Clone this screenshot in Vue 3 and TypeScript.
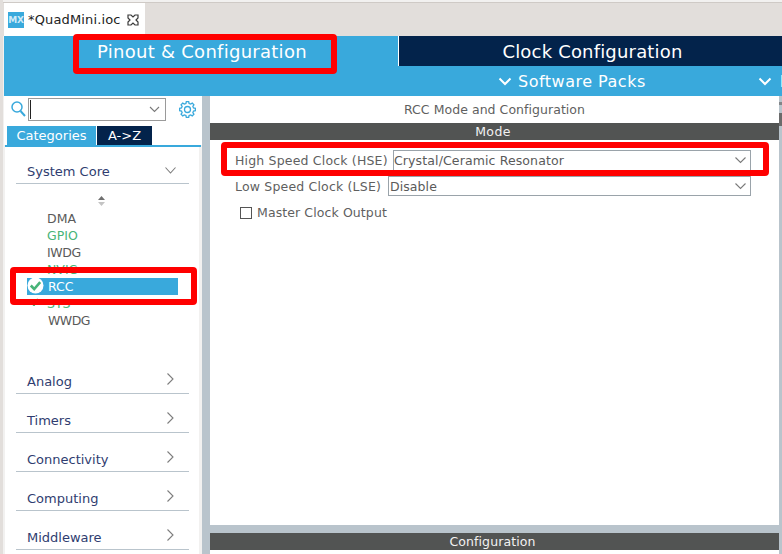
<script setup lang="ts">
const items = [
  { name: 'DMA', cls: '' },
  { name: 'GPIO', cls: 'green' },
  { name: 'IWDG', cls: 'narrow' },
  { name: 'NVIC', cls: 'green' },
  { name: 'RCC', cls: 'sel' },
  { name: 'SYS', cls: 'green' },
  { name: 'WWDG', cls: 'wide' },
]
const cats = ['Analog', 'Timers', 'Connectivity', 'Computing', 'Middleware']

function gearPath(cx: number, cy: number, outer: number, inner: number, teeth: number): string {
  const pts: string[] = []
  const step = (Math.PI * 2) / teeth
  for (let i = 0; i < teeth; i++) {
    const a = i * step - Math.PI / 2
    const offs: [number, number][] = [
      [-0.3, inner],
      [-0.17, outer],
      [0.17, outer],
      [0.3, inner],
    ]
    for (const [o, r] of offs) {
      const t = a + o * step * 1.1
      pts.push(`${(cx + r * Math.cos(t)).toFixed(2)} ${(cy + r * Math.sin(t)).toFixed(2)}`)
    }
  }
  return 'M' + pts.join('L') + 'Z'
}
const gear = gearPath(8.5, 8.5, 8, 6.2, 8)
</script>

<template>
  <div class="app">
    <div class="tabstrip">
      <div class="filetab">
        <span class="mx">MX</span>
        <span class="fname">*QuadMini.ioc</span>
        <svg class="close" width="12" height="12" viewBox="0 0 12 12">
          <path d="M1 1h3L6 3l2-2h3v3L9 6l2 2v3H8L6 9l-2 2H1V8l2-2-2-2z" fill="#fff" stroke="#3a3a3a" stroke-width="1.200" />
        </svg>
      </div>
    </div>
    <div class="header">
      <div class="mainrow">
        <div class="maintab active"><span>Pinout &amp; Configuration</span></div>
        <div class="maintab clock"><span>Clock Configuration</span></div>
      </div>
      <div class="subrow">
        <svg class="chev" width="14" height="9" viewBox="0 0 14 9"><path d="M1.500 1.500 7 7l5.500-5.500" fill="none" stroke="#fff" stroke-width="2" /></svg>
        <span class="packs">Software Packs</span>
        <svg class="chev second" width="14" height="9" viewBox="0 0 14 9"><path d="M1.500 1.500 7 7l5.500-5.500" fill="none" stroke="#fff" stroke-width="2" /></svg>
        <span class="pin">Pinout</span>
      </div>
    </div>
    <div class="body">
      <aside class="left">
        <div class="search">
          <svg class="mag" width="15" height="16" viewBox="0 0 15 16">
            <circle cx="6" cy="6" r="5" fill="none" stroke="#39a9dc" stroke-width="1.500" />
            <path d="M9.500 10 14 15" stroke="#39a9dc" stroke-width="2" />
          </svg>
          <div class="combo">
            <i class="caret"></i>
            <svg width="11" height="7" viewBox="0 0 11 7"><path d="M1 1l4.500 4.500L10 1" fill="none" stroke="#7a7a7a" stroke-width="1.100" /></svg>
          </div>
          <svg class="gear" width="17" height="17" viewBox="0 0 17 17">
            <path :d="gear" fill="none" stroke="#39a9dc" stroke-width="1.300" />
            <circle cx="8.500" cy="8.500" r="3" fill="none" stroke="#39a9dc" stroke-width="1.300" />
          </svg>
        </div>
        <div class="tabs">
          <span class="t cat">Categories</span>
          <span class="t az">A-&gt;Z</span>
        </div>
        <div class="rule"></div>
        <div class="panel">
          <div class="cathead first">
            <span>System Core</span>
            <svg class="dn" width="11" height="7" viewBox="0 0 11 7"><path d="M.5.500l5 5.500 5-5.500" fill="none" stroke="#7d7d7d" stroke-width="1.100" /></svg>
          </div>
          <div class="scroller">
            <svg width="9" height="12" viewBox="0 0 9 12"><path d="M4.500 1 8 5H1z" fill="#6f6f6f" /><path d="M4.500 11 8 7H1z" fill="#c4c4c4" /></svg>
          </div>
          <ul class="list">
            <li v-for="it in items" :key="it.name" :class="it.cls">
              <svg v-if="it.name === 'SYS'" class="tick" width="10" height="8" viewBox="0 0 10 8">
                <path d="M1 3l4 4 4-6" fill="none" stroke="#48b478" stroke-width="2.200" />
              </svg>
              <svg v-if="it.cls === 'sel'" class="ok" width="17" height="17" viewBox="0 0 17 17">
                <circle cx="8.500" cy="8.500" r="8" fill="#fff" />
                <path d="M3.800 8.500 7.200 12l6-6.800" fill="none" stroke="#48b478" stroke-width="2.600" />
              </svg>
              <span>{{ it.name }}</span>
            </li>
          </ul>
          <div v-for="c in cats" :key="c" class="cathead">
            <span>{{ c }}</span>
            <svg class="rt" width="7" height="12" viewBox="0 0 7 12"><path d="M.5.500 6 6 .5 11.500" fill="none" stroke="#7d7d7d" stroke-width="1.100" /></svg>
          </div>
        </div>
      </aside>
      <main class="right">
        <div class="pane">
          <div class="title">RCC Mode and Configuration</div>
          <div class="bar">Mode</div>
          <div class="form">
            <div class="row hse">
              <label>High Speed Clock (HSE)</label>
              <div class="select s1">
                <span>Crystal/Ceramic Resonator</span>
                <svg width="11" height="7" viewBox="0 0 11 7"><path d="M.5.500l5 5 5-5" fill="none" stroke="#7a7a7a" stroke-width="1.100" /></svg>
              </div>
            </div>
            <div class="row lse">
              <label>Low Speed Clock (LSE)</label>
              <div class="select s2">
                <span>Disable</span>
                <svg width="11" height="7" viewBox="0 0 11 7"><path d="M.5.500l5 5 5-5" fill="none" stroke="#7a7a7a" stroke-width="1.100" /></svg>
              </div>
            </div>
            <div class="check"><i class="box"></i><span>Master Clock Output</span></div>
          </div>
        </div>
        <div class="config">Configuration</div>
        <div class="tail"></div>
      </main>
      <div class="edge"><i class="m1"></i><i class="m2"></i></div>
    </div>

    <div class="red r1"></div>
    <div class="red r2"></div>
    <div class="red r3"></div>
  </div>
</template>

<style>
html, body { margin: 0; background: #fff; }
</style>

<style scoped>
.app {
  position: relative;
  width: 782px;
  height: 554px;
  overflow: hidden;
  display: flex;
  flex-direction: column;
  font-family: "DejaVu Sans", sans-serif;
  font-size: 12.500px;
  color: #5f5f5f;
  background: #f2f1f0;
  padding-left: 4px;
  box-sizing: border-box;
}
.app::before {
  content: "";
  position: absolute;
  left: 0;
  top: 0;
  width: 3px;
  height: 100%;
  background: #e2dedb;
}
.tabstrip {
  height: 33px;
  margin-top: 3px;
  margin-left: -1px;
  background: #e2dedb;
  box-shadow: 0 -1px 0 #cfcac6;
  display: flex;
  flex-shrink: 0;
}
.filetab {
  width: 141px;
  margin-left: 1px;
  background: #fff;
  display: flex;
  align-items: center;
  padding-left: 4px;
  box-sizing: border-box;
  gap: 4px;
  color: #222;
  font-size: 13px;
}
.mx {
  width: 16px;
  height: 16px;
  background: #39a9dc;
  color: #cfeaf7;
  font-size: 9px;
  font-weight: 700;
  display: flex;
  align-items: center;
  justify-content: center;
  letter-spacing: -0.3px;
}
.fname { width: 95px; white-space: nowrap; letter-spacing: 0.15px; }
.close { margin-left: 0; }
.header {
  height: 60px;
  background: #39a9dc;
  flex-shrink: 0;
  color: #fff;
}
.mainrow { height: 30px; display: flex; }
.maintab {
  display: flex;
  align-items: center;
  font-size: 18px;
  white-space: nowrap;
}
.maintab.active {
  width: 394px;
  padding-left: 93px;
  box-sizing: border-box;
  letter-spacing: 0.27px;
}
.maintab.clock {
  flex: 1;
  background: #03234b;
  border-left: 1px solid #fff;
  justify-content: center;
  padding-left: 4px;
  letter-spacing: 0.18px;
}
.subrow {
  height: 30px;
  display: flex;
  align-items: center;
  padding-left: 494px;
  font-size: 16px;
  white-space: nowrap;
  overflow: hidden;
}
.packs { margin-left: 6px; letter-spacing: 0.5px; }
.chev { flex-shrink: 0; }
.chev.second { margin-left: 112px; }
.pin { margin-left: 8px; }
.body { flex: 1; display: flex; min-height: 0; background: #b9c4cc; }
.left {
  width: 198px;
  background: #f2f1f0;
  flex-shrink: 0;
  display: flex;
  flex-direction: column;
  margin-right: 8px;
}
.search {
  height: 30px;
  display: flex;
  align-items: flex-start;
  padding: 2px 0 0 7px;
  box-sizing: border-box;
  flex-shrink: 0;
  background: #fff;
}
.mag { margin-top: 3px; }
.combo {
  width: 138px;
  height: 23px;
  margin-left: 2px;
  box-sizing: border-box;
  border: 1px solid #9a9a9a;
  display: flex;
  align-items: center;
  justify-content: space-between;
  padding: 0 5px 0 1px;
}
.caret { width: 1px; height: 19px; background: #222; }
.gear { margin: 3px 0 0 13px; }
.tabs {
  height: 19px;
  padding-left: 3px;
  display: flex;
  gap: 1px;
  flex-shrink: 0;
  color: #fff;
  font-size: 13px;
  background: #fff;
}
.t {
  display: flex;
  align-items: center;
  justify-content: center;
  height: 19px;
}
.cat { width: 89px; background: #39a9dc; }
.az { width: 55px; background: #03234b; }
.rule { height: 2px; margin: 0 1px; background: #39a9dc; flex-shrink: 0; }
.panel {
  flex: 1;
  margin: 0 3px 0 1px;
  padding: 0 10px 0 11px;
  background: #fff;
}
.cathead {
  height: 39px;
  box-sizing: border-box;
  border-bottom: 1px solid #b9c4cc;
  display: flex;
  align-items: flex-end;
  justify-content: space-between;
  padding: 0 15px 3px 11px;
  color: #2f3d70;
  font-size: 13px;
  line-height: 16px;
}
.cathead.first { height: 37px; padding-right: 13px; }
.cathead .dn { margin-bottom: 6px; }
.cathead .rt { margin-bottom: 5px; }
.scroller {
  height: 26px;
  display: flex;
  align-items: center;
  justify-content: center;
  padding-top: 8px;
  padding-right: 2px;
  box-sizing: border-box;
}
.list {
  list-style: none;
  margin: 0;
  padding: 0;
  height: 145px;
}
.list li {
  height: 17px;
  line-height: 17px;
  padding-left: 31px;
  position: relative;
  font-size: 12.500px;
  color: #5a5a5a;
}
.list li.green { color: #48b478; }
.list li.narrow { letter-spacing: -0.4px; }
.list li.wide { padding-left: 32px; letter-spacing: -0.5px; }
.list li.sel {
  margin-left: 11px;
  padding-left: 21px;
  width: 151px;
  background: #39a9dc;
  color: #fff;
  box-sizing: border-box;
}
.ok { position: absolute; left: 0; top: -1px; }
.tick { position: absolute; left: 13px; top: 3px; }
.right {
  flex: 1;
  min-width: 0;
  display: flex;
  flex-direction: column;
}
.pane { flex: 1; background: #fff; min-height: 0; }
.title {
  height: 27px;
  display: flex;
  align-items: center;
  justify-content: center;
  font-size: 12.500px;
  letter-spacing: 0.05px;
}
.bar, .config {
  height: 17px;
  line-height: 17px;
  background: #525453;
  color: #f2f2f2;
  text-align: center;
  font-size: 12.500px;
  padding-right: 4px;
  letter-spacing: 0.1px;
}
.bar { letter-spacing: 0.4px; padding-right: 3px; }
.config { margin-top: 8px; flex-shrink: 0; }
.tail { height: 4px; background: #fff; flex-shrink: 0; }
.form { padding: 10px 0 0 25px; }
.row { display: flex; align-items: center; }
.row label { white-space: nowrap; letter-spacing: 0.18px; }
.row.hse { height: 21px; }
.row.hse label { width: 158px; }
.row.lse { height: 20px; margin-top: 5px; }
.row.lse label { width: 153px; }
.select {
  height: 100%;
  box-sizing: border-box;
  border: 1px solid #9aa3aa;
  display: flex;
  align-items: center;
  justify-content: space-between;
  padding: 0 4px 0 1px;
  color: #5a5a5a;
  letter-spacing: 0.08px;
}
.s1 { width: 358px; padding-left: 0; letter-spacing: 0.12px; }
.s2 { width: 363px; }
.check {
  display: flex;
  align-items: center;
  margin: 10px 0 0 5px;
  gap: 5px;
  height: 13px;
  letter-spacing: 0.1px;
}
.box {
  width: 12px;
  height: 12px;
  box-sizing: border-box;
  border: 1px solid #555;
}
.edge { width: 3px; flex-shrink: 0; }
.edge i { display: block; background: #6b6b6b; }
.edge .m1 { height: 3px; margin-top: 6px; opacity: 0.7; }
.edge .m2 { height: 13px; margin-top: 8px; }
.red {
  position: absolute;
  border: 6px solid #f00;
  border-radius: 4px;
  box-sizing: border-box;
}
.r1 { left: 73px; top: 34px; width: 264px; height: 40px; }
.r2 { left: 221px; top: 142px; width: 548px; height: 34px; }
.r3 { left: 10px; top: 267px; width: 187px; height: 38px; }
</style>
